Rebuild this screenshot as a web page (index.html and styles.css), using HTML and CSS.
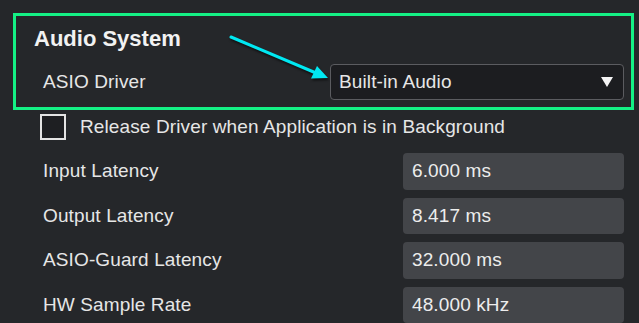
FILE: index.html
```html
<!DOCTYPE html>
<html lang="en">

<head>
  <meta charset="UTF-8">
  <title>Audio System</title>
  <link rel="stylesheet" href="styles.css">
</head>

<body>
  <div class="group">
    <div class="group-title">Audio System</div>
    <div class="driver-row">
      <span class="driver-label">ASIO Driver</span>
      <div class="select">
        <span>Built-in Audio</span>
        <span class="caret"></span>
      </div>
    </div>
  </div>

  <label class="check-row">
    <span class="checkbox"></span>
    <span>Release Driver when Application is in Background</span>
  </label>

  <div class="rows">
    <div class="row">
      <span>Input Latency</span>
      <div class="value">6.000 ms</div>
    </div>
    <div class="row">
      <span>Output Latency</span>
      <div class="value">8.417 ms</div>
    </div>
    <div class="row">
      <span>ASIO-Guard Latency</span>
      <div class="value">32.000 ms</div>
    </div>
    <div class="row">
      <span>HW Sample Rate</span>
      <div class="value">48.000 kHz</div>
    </div>
  </div>

  <svg class="pointer" width="639" height="323" viewBox="0 0 639 323">
    <line x1="231" y1="37" x2="316" y2="73" stroke="#00e8f2" stroke-width="3" stroke-linecap="round" />
    <polygon points="328,78 311,78.5 317,66" fill="#00e8f2" />
  </svg>
</body>

</html>
```

FILE: styles.css
```css
body {
  margin: 0;
  background-color: #25272a;
  color: #e6e6e6;
  font-family: 'Liberation Sans', Arial, sans-serif;
  font-size: 19px;
  letter-spacing: 0.12px;
  width: 639px;
  height: 323px;
  overflow: hidden;
  position: relative;
}

.group {
  margin: 13px 5px 0 13px;
  border: 3px solid #14f185;
  padding: 11px 7px 7px 18px;
}

.group-title {
  font-size: 22px;
  font-weight: bold;
  line-height: 24px;
  letter-spacing: 0;
  color: #f2f2f2;
}

.driver-row {
  display: flex;
  align-items: center;
  justify-content: space-between;
  margin-top: 13px;
}

.driver-label {
  margin-left: 9px;
  line-height: 36px;
}

.select {
  width: 294px;
  height: 36px;
  box-sizing: border-box;
  background-color: #1c1d20;
  border: 1px solid #5b5c60;
  border-radius: 4px;
  display: flex;
  align-items: center;
  justify-content: space-between;
  padding: 0 10px 0 8px;
}

.caret {
  width: 0;
  height: 0;
  border-left: 6px solid transparent;
  border-right: 6px solid transparent;
  border-top: 10px solid #f4f4f4;
}

.check-row {
  display: flex;
  align-items: center;
  gap: 14px;
  margin: 3px 0 0 40px;
  height: 27px;
}

.checkbox {
  width: 26px;
  height: 26px;
  box-sizing: border-box;
  border: 2px solid #e4e4e4;
  background-color: #1e1f22;
}

.rows {
  display: flex;
  flex-direction: column;
  gap: 8px;
  margin: 13px 15px 0 43px;
}

.row {
  display: flex;
  align-items: center;
  justify-content: space-between;
}

.value {
  width: 221px;
  height: 36.5px;
  line-height: 36.5px;
  box-sizing: border-box;
  padding-left: 9px;
  background-color: #434549;
  border-radius: 4px;
  color: #ededed;
}

.pointer {
  position: absolute;
  top: 0;
  left: 0;
  pointer-events: none;
  filter: drop-shadow(1px 2px 1px rgba(0, 0, 0, 0.6));
}
```
